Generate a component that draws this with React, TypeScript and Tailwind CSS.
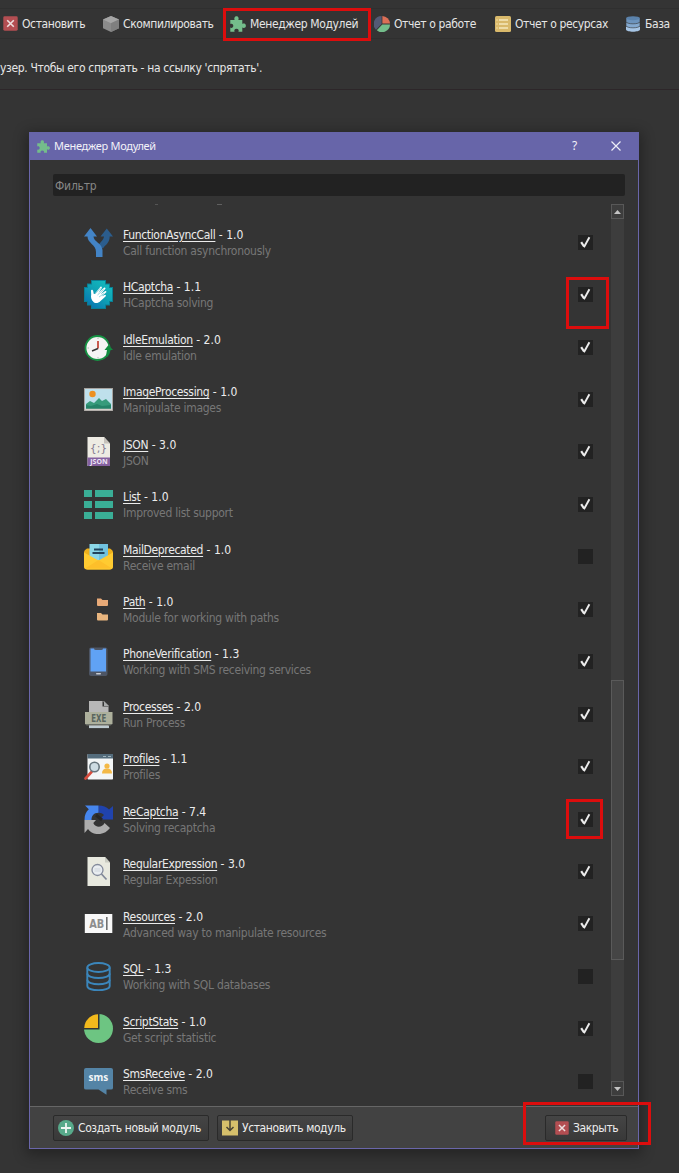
import type { ReactNode } from "react";

const box = "block shrink-0";

function PuzzleIcon({ className }: { className: string }) {
  return (
    <svg viewBox="0 0 16 16" className={`${box} ${className}`} fill="#74bd8b">
      <path d="M0.3 4H4.7C4 3 4.2 0.2 6.5 0.2S9 3 8.3 4H12.3V8C13.2 7.3 15.9 7.3 15.9 9.8S13.2 12.2 12.3 11.5V15.8H8.4C9.2 14.5 8.5 12.8 6.5 12.8S3.9 14.5 4.6 15.8H0.3V11.6C1.6 12.3 3.3 11.8 3.3 9.8S1.6 7.2 0.3 8Z" />
    </svg>
  );
}

function CloseIcon({ className }: { className: string }) {
  return (
    <svg viewBox="0 0 16 16" className={`${box} ${className}`}>
      <rect x="0.3" y="0.3" width="15.4" height="15.4" rx="1.5" fill="#b34e52" />
      <path d="M4.5 4.5l7 7m0-7l-7 7" stroke="#eedfdf" strokeWidth="1.7" />
    </svg>
  );
}

function CubeIcon() {
  return (
    <svg viewBox="0 0 16 16" className={`${box} size-4`}>
      <path d="M8 0l8 3.5v8.7L8 16 0 12.2V3.5z" fill="#8b8b8b" />
      <path d="M8 0l8 3.5L8 7.2 0 3.5z" fill="#a5a5a5" />
      <path d="M8 7.2l8-3.7v8.7L8 16z" fill="#7f7f7f" />
    </svg>
  );
}

function PieIcon() {
  return (
    <svg viewBox="0 0 16 16" className={`${box} size-4`}>
      <path d="M7.6 8V0A8 8 0 0 0 2 13.7z" fill="#535a75" />
      <path d="M8.4 7.5V0.1A8 8 0 0 1 16 7.5z" fill="#dc6f57" />
      <path d="M8.2 8.5H16A8 8 0 0 1 2.8 14.3z" fill="#74bd8b" />
    </svg>
  );
}

function NotesIcon() {
  return (
    <svg viewBox="0 0 16 16" className={`${box} size-4`}>
      <rect width="16" height="16" rx="1.5" fill="#d9b96b" />
      <path d="M4 4h9M4 8h9M4 12h9" stroke="#f5e7bd" strokeWidth="1.5" />
      <path d="M1 4h2M1 8h2M1 12h2" stroke="#f0dca3" strokeWidth="1" />
    </svg>
  );
}

function StackIcon() {
  return (
    <svg viewBox="0 0 16 16" className={`${box} size-4`}>
      <path d="M1 10.5v3C1 16.4 15 16.4 15 13.5v-3z" fill="#a6c5e5" />
      <path d="M1 6v3.500C1 12.600 15 12.600 15 9.500V6z" fill="#84a9cf" stroke="#343434" strokeWidth="0.6" />
      <path d="M1 2.200v3.300C1 8.600 15 8.600 15 5.500V2.200z" fill="#6d94bd" stroke="#343434" strokeWidth="0.6" />
      <ellipse cx="8" cy="2.200" rx="7" ry="2" fill="#5b82ab" />
    </svg>
  );
}

function Glyph({ children }: { children: ReactNode }) {
  return (
    <svg viewBox="0 0 29 29" className={`${box} size-[29px]`}>
      {children}
    </svg>
  );
}

const forkIcon = (
  <Glyph>
    <path d="M15 18C15 14 19.500 13 20 8.500H16.500L22.800 0.500 29 8.500H25.700C25.700 15 21.500 16.500 19 20.500z" fill="#2b5d8d" />
    <path d="M6.500 0L0 8.500H3.500C3.500 15.500 12 16 12 24V29H18.500V22C18 15 9.700 14 9.500 8.500H13z" fill="#4384c6" />
  </Glyph>
);

const handIcon = (
  <Glyph>
    <defs>
      <linearGradient id="hc" x1="1" y1="0" x2="0.2" y2="1">
        <stop offset="0" stopColor="#16c0c0" />
        <stop offset="0.5" stopColor="#0fa3b5" />
        <stop offset="1" stopColor="#0874b2" />
      </linearGradient>
    </defs>
    <path d="M7 0H22V3.500H26V7H29V22H26V25.500H22V29H7V25.500H3V22H0V7H3V3.500H7z" fill="#097f94" />
    <path d="M8 1H21V4.500H25V8H28V21H25V24.500H21V28H8V24.500H4V21H1V8H4V4.500H8z" fill="url(#hc)" />
    <path d="M10 22.500C7 20 6.700 17 7.200 14.500L7 10.500C7.500 9.300 8.800 9.800 9.200 11L9.800 14 10.500 14 16.500 6.700C17.600 6.300 18.200 7.200 17.700 8.200L14.500 12.500 20.300 7.500C21.400 7.200 21.900 8.300 21.200 9.100L16.600 14.200 21.300 11C22.400 10.700 22.800 11.900 22 12.600L17.500 16.500 21 14.800C22 14.800 22.200 15.800 21.500 16.400L16.500 21C14.500 23.200 12 23.500 10 22.500z" fill="#fff" />
    <path d="M11 14l5.500-6M13.500 15l6-5.500M15 17l5-3.500" stroke="#35a9bd" strokeWidth="0.500" />
  </Glyph>
);

const clockIcon = (
  <Glyph>
    <circle cx="13.500" cy="15" r="12" fill="#f4f4f4" stroke="#169344" strokeWidth="1.800" />
    <path d="M25 6.500l2.500 4v2l-3-2z" fill="#343434" />
    <path d="M20.500 17L24.500 12 29 17H26.500C26 20 25 22 23.200 24L22 22.500 23 17z" fill="#118c40" />
    <path d="M14 8v7.500" stroke="#c54a3d" strokeWidth="1.800" />
    <path d="M14 15.500L8 18" stroke="#333" strokeWidth="1.400" />
    <path d="M14 4.500v1.500M14 24v1.500M3.500 15H5" stroke="#999" strokeWidth="0.700" />
  </Glyph>
);

const imageIcon = (
  <Glyph>
    <rect x="0.500" y="3.500" width="28" height="22" fill="#bfe0ec" stroke="#a7a4a0" />
    <circle cx="8.500" cy="9" r="3.200" fill="#ed9020" />
    <path d="M2 24v-5l4-3 4 2 5-5 3 3 4-2 5 5v5z" fill="#379b7b" />
    <path d="M2 24v-4l5 1 6-2 5 2 9-1v4z" fill="#258368" />
    <path d="M1 24.500H28" stroke="#d4cfc9" strokeWidth="1.500" />
  </Glyph>
);

const jsonIcon = (
  <Glyph>
    <path d="M3.500 0H20L26 6.500V29H3.500z" fill="#edebe3" />
    <path d="M20 0v6.500h6z" fill="#c5c1bb" />
    <rect x="3.500" y="20.500" width="22.500" height="8.500" fill="#8561a0" />
    <text x="14.500" y="15" textAnchor="middle" fontSize="11" fontFamily="DejaVu Sans, sans-serif" fill="#867c91">{"{;}"}</text>
    <text x="15" y="27.400" textAnchor="middle" fontSize="7" fontWeight="bold" fontFamily="Noto Sans, sans-serif" fill="#eee6f5">JSON</text>
  </Glyph>
);

const listIcon = (
  <Glyph>
    <path d="M0 0h8v7H0zM11 0h18v7H11zM0 11h8v7H0zM11 11h18v7H11zM0 22h8v7H0zM11 22h18v7H11z" fill="#3aae96" />
  </Glyph>
);

const mailIcon = (
  <Glyph>
    <path d="M0 10Q0 8 3 6.500H26Q29 8 29 10V24Q29 27.500 25.500 27.500H3.500Q0 27.500 0 24z" fill="#edb01c" />
    <path d="M5.500 2H24V19H5.500z" fill="#8bd7e8" />
    <path d="M15 2h9v17h-9z" fill="#70c2df" />
    <path d="M10 7.500h9M8.500 11h12" stroke="#22445d" strokeWidth="1.800" />
    <path d="M0 10.500L14.500 18.500 29 10.500V24Q29 27.500 25.500 27.500H3.500Q0 27.500 0 24z" fill="#ffcb31" />
    <path d="M1 26.500L14.500 18 28 26.500" fill="#fdbf2a" />
  </Glyph>
);

const foldersIcon = (
  <Glyph>
    <path d="M13 3.500h4l1.500 1.500h5.500v5q0 1-1 1h-9q-1 0-1-1z" fill="#e8aa78" />
    <path d="M13 18h4l1.500 1.500h5.500v5q0 1-1 1h-9q-1 0-1-1z" fill="#e9b57e" />
  </Glyph>
);

const phoneIcon = (
  <Glyph>
    <rect x="5" y="0.500" width="18.500" height="28.500" rx="2" fill="#4d5564" />
    <path d="M6.500 1.500h3.500q0 1.500 2 1.500h5q2 0 2-1.500h3v23H6.500z" fill="#60a2f5" />
    <rect x="12" y="26" width="5" height="1.500" rx="0.700" fill="#c8ccd2" />
  </Glyph>
);

const exeIcon = (
  <Glyph>
    <path d="M5 1h14l5.500 5v20H5z" fill="#b7b7b7" />
    <path d="M18.500 1v5.500h6z" fill="#343434" />
    <path d="M20 1l5 5h-5z" fill="#a8aaaa" />
    <rect x="1" y="12" width="27.500" height="12" fill="#adb09c" />
    <path d="M1 24h27.500l-2 1.500h-24z" fill="#6c7068" />
    <rect x="5" y="25.800" width="20" height="2.300" fill="#bdcad0" />
    <text x="14.700" y="21.600" textAnchor="middle" fontSize="10" fontFamily="DejaVu Sans Condensed, sans-serif" fontWeight="bold" textLength="15" lengthAdjust="spacingAndGlyphs" fill="#59655f">EXE</text>
  </Glyph>
);

const profileIcon = (
  <Glyph>
    <rect x="3.500" y="2" width="25.500" height="25.500" rx="0.800" fill="#f3f6f7" />
    <rect x="3.500" y="2" width="25.500" height="4.500" fill="#546c7c" />
    <path d="M19 4.500h3M24 4.500h3" stroke="#9fb4bd" />
    <circle cx="23" cy="14" r="2.600" fill="#f3b947" />
    <path d="M18 21.500q0-5 5-5t5 5z" fill="#f3b947" />
    <path d="M7.500 20L1.500 26.500" stroke="#d64d3e" strokeWidth="2.600" strokeLinecap="round" />
    <circle cx="10.500" cy="15" r="4.700" fill="#cddce3" stroke="#66757d" strokeWidth="1.600" />
  </Glyph>
);

const recaptchaIcon = (
  <Glyph>
    <path d="M14.500 0.500C19 0.500 22.500 2 25 4.500L29 1V14.500H15.500L20 10C18.500 8.500 17 7.700 14.500 7.700z" fill="#2043ad" />
    <path d="M14.500 0.500V7.700C9.500 7.700 7.500 11 7.500 15H0.500C0.500 10 2 7 4.800 4.300L1 0.500z" fill="#4686ee" />
    <path d="M0.500 15H12L9.300 18C11.500 23 18 23 20.500 18L26 23C20 31 9 31 4 24L0.500 28z" fill="#adadad" />
    <path d="M12 10l6 5" stroke="#262626" strokeWidth="3" />
  </Glyph>
);

const regexIcon = (
  <Glyph>
    <path d="M3.500 0H21L26 5.500V29H3.500z" fill="#e8e9df" />
    <path d="M21 0v5.500h5z" fill="#c9cbc2" />
    <circle cx="13.500" cy="13" r="5.500" fill="#e9edf1" stroke="#848b9c" strokeWidth="1.300" />
    <path d="M17.500 17l5 5.500" stroke="#808898" strokeWidth="1.700" />
    <path d="M10.500 12h6M10.500 14h6" stroke="#c4cbd2" strokeWidth="0.700" />
  </Glyph>
);

const resourcesIcon = (
  <Glyph>
    <rect x="0.800" y="5" width="27.500" height="19" fill="#f8f8f8" />
    <text x="12.800" y="18.700" textAnchor="middle" fontSize="12" fontFamily="DejaVu Sans Condensed, sans-serif" fontWeight="bold" textLength="15" lengthAdjust="spacingAndGlyphs" fill="#8e8e8e">AB</text>
    <path d="M22.800 8v13" stroke="#707070" strokeWidth="1.600" />
  </Glyph>
);

const sqlIcon = (
  <Glyph>
    <g fill="none" stroke="#3b86bb" strokeWidth="1.900">
      <ellipse cx="14.500" cy="5.500" rx="11.200" ry="4.500" />
      <path d="M3.300 5.500V24C3.300 29.700 25.700 29.700 25.700 24V5.500" />
      <path d="M3.300 11.500C3.300 17.500 25.700 17.500 25.700 11.500M3.300 17.700C3.300 23.700 25.700 23.700 25.700 17.700" />
    </g>
  </Glyph>
);

const statsIcon = (
  <Glyph>
    <circle cx="14.500" cy="14.500" r="14.500" fill="#6dc582" />
    <path d="M0 0H15.500V15.500H0z" fill="#343434" />
    <path d="M14 0.200V14H0.200A14.300 14.300 0 0 1 14 0.200z" fill="#f2b91c" />
  </Glyph>
);

const smsIcon = (
  <Glyph>
    <path d="M2 1H27Q29 1 29 3V21Q29 22.500 27 22.500H22.500V27.700L14.500 22.500H2Q0 22.500 0 21V3Q0 1 2 1z" fill="#5484a6" />
    <text x="14.500" y="14" textAnchor="middle" fontSize="10" fontFamily="Noto Sans, sans-serif" fontWeight="bold" fill="#f3f6f8">sms</text>
  </Glyph>
);

type Module = { name: string; version: string; about: string; icon: ReactNode; on: boolean };

const modules: Module[] = [
  { name: "FunctionAsyncCall", version: "1.0", about: "Call function asynchronously", icon: forkIcon, on: true },
  { name: "HCaptcha", version: "1.1", about: "HCaptcha solving", icon: handIcon, on: true },
  { name: "IdleEmulation", version: "2.0", about: "Idle emulation", icon: clockIcon, on: true },
  { name: "ImageProcessing", version: "1.0", about: "Manipulate images", icon: imageIcon, on: true },
  { name: "JSON", version: "3.0", about: "JSON", icon: jsonIcon, on: true },
  { name: "List", version: "1.0", about: "Improved list support", icon: listIcon, on: true },
  { name: "MailDeprecated", version: "1.0", about: "Receive email", icon: mailIcon, on: false },
  { name: "Path", version: "1.0", about: "Module for working with paths", icon: foldersIcon, on: true },
  { name: "PhoneVerification", version: "1.3", about: "Working with SMS receiving services", icon: phoneIcon, on: true },
  { name: "Processes", version: "2.0", about: "Run Process", icon: exeIcon, on: true },
  { name: "Profiles", version: "1.1", about: "Profiles", icon: profileIcon, on: true },
  { name: "ReCaptcha", version: "7.4", about: "Solving recaptcha", icon: recaptchaIcon, on: true },
  { name: "RegularExpression", version: "3.0", about: "Regular Expession", icon: regexIcon, on: true },
  { name: "Resources", version: "2.0", about: "Advanced way to manipulate resources", icon: resourcesIcon, on: true },
  { name: "SQL", version: "1.3", about: "Working with SQL databases", icon: sqlIcon, on: false },
  { name: "ScriptStats", version: "1.0", about: "Get script statistic", icon: statsIcon, on: true },
  { name: "SmsReceive", version: "2.0", about: "Receive sms", icon: smsIcon, on: false },
];

function Check({ on }: { on: boolean }) {
  return (
    <div className="size-[15px] shrink-0 bg-[#222222]">
      {on && (
        <svg viewBox="0 0 15 15" className="block size-[15px]" fill="none" stroke="#ececec">
          <path d="M3.200 7.200L6 11.500" strokeWidth="2.200" />
          <path d="M5.900 12.200L11.400 2.200" strokeWidth="1.900" />
        </svg>
      )}
    </div>
  );
}

function ModuleRow({ item }: { item: Module }) {
  return (
    <div className="flex h-[52.45px] shrink-0 items-center">
      {item.icon}
      <div className="ml-[10px] flex-1 whitespace-nowrap pt-[1.5px] text-[12px] leading-[16px] tracking-[-0.27px]">
        <div className="text-[#ececec]">
          <span className="tracking-[-0.34px] underline underline-offset-2">{item.name}</span>
          <span className="tracking-[0.02px]"> - {item.version}</span>
        </div>
        <div className="text-[#777777]">{item.about}</div>
      </div>
      <Check on={item.on} />
    </div>
  );
}

function ToolItem({ icon, label, className }: { icon: ReactNode; label: string; className: string }) {
  return (
    <div className={`flex shrink-0 items-center gap-1 ${className}`}>
      {icon}
      <span className="tracking-[-0.38px]">{label}</span>
    </div>
  );
}

function ArrowButton({ down }: { down?: boolean }) {
  return (
    <div className="flex h-[15px] w-[13px] shrink-0 items-center justify-center border border-[#585858] bg-[#3d3d3d]">
      <svg viewBox="0 0 7 4" className="h-1 w-[7px]" fill="#c4c4c4">
        <path d={down ? "M0 0h7L3.500 4z" : "M0 4h7L3.500 0z"} />
      </svg>
    </div>
  );
}

const button =
  "flex h-[26px] shrink-0 items-center whitespace-nowrap rounded-[2px] border border-[#2a2a2a] bg-linear-to-b from-[#454545] to-[#393939] text-[12px] tracking-[-0.4px] text-[#ececec]";

export default function App() {
  return (
    <div className="relative flex h-[1173px] w-[679px] flex-col overflow-hidden bg-[#343434] font-['DejaVu_Sans_Condensed','DejaVu_Sans',sans-serif] text-[12px] text-[#e6e6e6]">
      <div className="mt-2 flex h-[31px] shrink-0 items-center overflow-hidden whitespace-nowrap border-y border-[#2f2f2f] pl-[3px]">
        <ToolItem className="w-[100px]" icon={<CloseIcon className="size-[15px]" />} label="Остановить" />
        <ToolItem className="w-[127px]" icon={<CubeIcon />} label="Скомпилировать" />
        <ToolItem className="w-[144px]" icon={<PuzzleIcon className="size-4" />} label="Менеджер Модулей" />
        <ToolItem className="w-[121px]" icon={<PieIcon />} label="Отчет о работе" />
        <ToolItem className="w-[130px]" icon={<NotesIcon />} label="Отчет о ресурсах" />
        <ToolItem className="w-[60px]" icon={<StackIcon />} label="База" />
      </div>
      <div className="mt-[21px] h-4 shrink-0 whitespace-nowrap leading-4 tracking-[-0.34px]">
        узер. Чтобы его спрятать - на ссылку 'спрятать'.
      </div>
      <div className="mt-[13px] h-px shrink-0 bg-[#2d2629]" />

      <div className="ml-[29px] mt-[42px] flex h-[1017px] w-[610px] shrink-0 flex-col border border-[#6a66aa] bg-[#343434] shadow-[0_3px_12px_3px_rgba(0,0,0,0.3)]">
        <div className="-m-px mb-0 flex h-7 shrink-0 items-center bg-[#6765a9] pl-2 font-['Noto_Sans',sans-serif] text-[11px] text-[#f2f2f8]">
          <PuzzleIcon className="size-[13px]" />
          <span className="ml-1 flex-1 tracking-[-0.3px]">Менеджер Модулей</span>
          <span className="w-[39px] text-[12px]">?</span>
          <svg viewBox="0 0 10 10" className="mr-[18px] size-[10px]" fill="none" stroke="#eeeef6" strokeWidth="1.200">
            <path d="M0.500 0.500l9 9m0-9l-9 9" />
          </svg>
        </div>

        <div className="ml-[23px] mt-[14px] flex h-[22px] w-[572px] shrink-0 items-center rounded-[2px] bg-[#222222] pl-[2px] pt-px tracking-[-0.2px] text-[#868686]">
          Фильтр
        </div>

        <div className="ml-[54px] mt-[8px] flex h-[892px] shrink-0">
          <div className="flex w-[509px] flex-col overflow-hidden">
            <div className="flex h-3 shrink-0 pl-[71px]">
              <div className="h-px w-[3px] bg-[#555555]" />
              <div className="ml-[59px] h-px w-[5px] bg-[#606060]" />
            </div>
            {modules.map((item) => (
              <ModuleRow key={item.name} item={item} />
            ))}
          </div>
          <div className="ml-[18px] flex w-[13px] flex-col bg-[#3d3d3d]">
            <ArrowButton />
            <div className="mt-[461px] h-[280px] shrink-0 border border-[#5a5a5a] bg-[#454545]" />
            <div className="flex-1" />
            <ArrowButton down />
          </div>
        </div>

        <div className="mt-[10px] flex flex-1 items-center border-t border-[#666666] bg-[#424242] pl-[23px] pr-[11px] pt-px">
          <div className={`${button} w-[156px] pl-1`}>
            <svg viewBox="0 0 16 16" className={`${box} size-4`}>
              <circle cx="8" cy="8" r="8" fill="#58aa8b" />
              <path d="M8 3v10M3 8h10" stroke="#f0f6f3" strokeWidth="1.800" />
            </svg>
            <span className="ml-1">Создать новый модуль</span>
          </div>
          <div className={`${button} ml-2 w-[136px] pl-1`}>
            <svg viewBox="0 0 16 16" className={`${box} size-4`}>
              <path d="M0 0.500h16v15H0z" fill="#d5bf6b" />
              <path d="M8 0v10M4.500 7L8 10.500 11.500 7" fill="none" stroke="#474335" strokeWidth="1.500" />
            </svg>
            <span className="ml-1">Установить модуль</span>
          </div>
          <div className={`${button} ml-auto w-[82px] pl-[9px]`}>
            <CloseIcon className="size-[14px]" />
            <span className="ml-[4px]">Закрыть</span>
          </div>
        </div>
      </div>

      <div className="absolute left-[223px] top-[8px] h-[33px] w-[148px] border-[3px] border-[#dc0d0d]" />
      <div className="absolute left-[566px] top-[277px] h-[52px] w-[43px] border-[3px] border-[#dc0d0d]" />
      <div className="absolute left-[566px] top-[799px] h-[40px] w-[37px] border-[3px] border-[#dc0d0d]" />
      <div className="absolute left-[523px] top-[1102px] h-[43px] w-[128px] border-[3px] border-[#dc0d0d]" />
    </div>
  );
}
